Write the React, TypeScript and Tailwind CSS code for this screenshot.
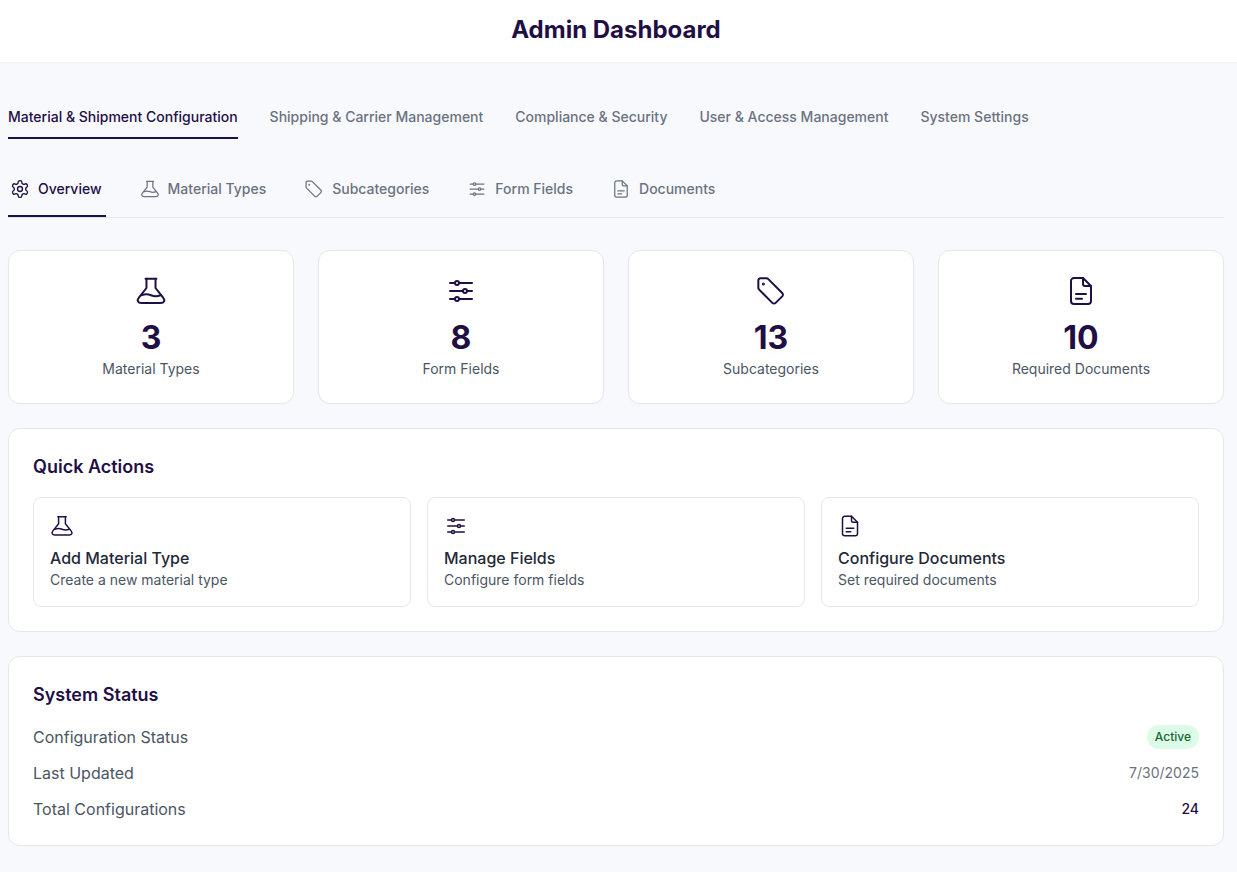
const ink = "text-[#1f0f45]";

type IconProps = { className?: string };

function FlaskIcon({ className }: IconProps) {
  return (
    <svg viewBox="0 0 24 24" fill="none" stroke="currentColor" strokeWidth="1.5" strokeLinecap="round" strokeLinejoin="round" className={className}>
      <path d="M7.9 2.75h8.2" />
      <path d="M8.6 2.75v7L2.9 16.9c-1.7 2.2-.8 4.1 1.9 4.1h14.4c2.7 0 3.6-1.9 1.9-4.1l-5.7-7.15v-7" />
      <path d="M4.9 15.2c2.4-1 4.6-1 7.1 0s4.7 1 7.1 0" />
    </svg>
  );
}

function SlidersIcon({ className }: IconProps) {
  return (
    <svg viewBox="0 0 24 24" fill="none" stroke="currentColor" strokeWidth="1.5" strokeLinecap="round" className={className}>
      <path d="M3.75 6h3.75M10.5 6h9.75M3.75 12h9.75M16.5 12h3.75M3.75 18h3.75M10.5 18h9.75" />
      <circle cx="9" cy="6" r="1.5" />
      <circle cx="15" cy="12" r="1.5" />
      <circle cx="9" cy="18" r="1.5" />
    </svg>
  );
}

function TagIcon({ className }: IconProps) {
  return (
    <svg viewBox="0 0 24 24" fill="none" stroke="currentColor" strokeWidth="1.5" strokeLinecap="round" strokeLinejoin="round" className={className}>
      <path d="M4 2.5h4.6c.5 0 1 .2 1.4.6l10.4 10.4c.7.7.7 1.8 0 2.5l-4.9 4.9c-.7.7-1.8.7-2.5 0L3.1 11c-.4-.4-.6-.9-.6-1.4V4c0-.8.7-1.5 1.5-1.5z" />
      <circle cx="6.3" cy="6.8" r="0.4" fill="currentColor" />
    </svg>
  );
}

function DocIcon({ className }: IconProps) {
  return (
    <svg viewBox="0 0 24 24" fill="none" stroke="currentColor" strokeWidth="1.5" strokeLinecap="round" strokeLinejoin="round" className={className}>
      <path d="M13.5 2.25H6.75A2.25 2.25 0 0 0 4.5 4.5v15a2.25 2.25 0 0 0 2.25 2.25h10.5a2.25 2.25 0 0 0 2.25-2.25V8.25l-6-6z" />
      <path d="M13.5 2.25v4.5A1.5 1.5 0 0 0 15 8.25h4.5" />
      <path d="M8.25 14.25h7.5M8.25 17.75h4.5" />
    </svg>
  );
}

function GearIcon({ className }: IconProps) {
  return (
    <svg viewBox="0 0 24 24" fill="none" stroke="currentColor" strokeWidth="1.6" strokeLinecap="round" strokeLinejoin="round" className={className}>
      <path d="M12.22 2h-.44a2 2 0 0 0-2 2v.18a2 2 0 0 1-1 1.73l-.43.25a2 2 0 0 1-2 0l-.15-.08a2 2 0 0 0-2.73.73l-.22.38a2 2 0 0 0 .73 2.73l.15.1a2 2 0 0 1 1 1.72v.51a2 2 0 0 1-1 1.74l-.15.09a2 2 0 0 0-.73 2.73l.22.38a2 2 0 0 0 2.73.73l.15-.08a2 2 0 0 1 2 0l.43.25a2 2 0 0 1 1 1.73V20a2 2 0 0 0 2 2h.44a2 2 0 0 0 2-2v-.18a2 2 0 0 1 1-1.73l.43-.25a2 2 0 0 1 2 0l.15.08a2 2 0 0 0 2.73-.73l.22-.39a2 2 0 0 0-.73-2.73l-.15-.08a2 2 0 0 1-1-1.74v-.5a2 2 0 0 1 1-1.74l.15-.09a2 2 0 0 0 .73-2.73l-.22-.38a2 2 0 0 0-2.73-.73l-.15.08a2 2 0 0 1-2 0l-.43-.25a2 2 0 0 1-1-1.73V4a2 2 0 0 0-2-2z" />
      <circle cx="12" cy="12" r="3" />
    </svg>
  );
}

const mainTabs = [
  "Material & Shipment Configuration",
  "Shipping & Carrier Management",
  "Compliance & Security",
  "User & Access Management",
  "System Settings",
];

const subTabs = [
  { label: "Overview", icon: GearIcon },
  { label: "Material Types", icon: FlaskIcon },
  { label: "Subcategories", icon: TagIcon },
  { label: "Form Fields", icon: SlidersIcon },
  { label: "Documents", icon: DocIcon },
];

const stats = [
  { value: "3", label: "Material Types", icon: FlaskIcon },
  { value: "8", label: "Form Fields", icon: SlidersIcon },
  { value: "13", label: "Subcategories", icon: TagIcon },
  { value: "10", label: "Required Documents", icon: DocIcon },
];

const actions = [
  { title: "Add Material Type", body: "Create a new material type", icon: FlaskIcon },
  { title: "Manage Fields", body: "Configure form fields", icon: SlidersIcon },
  { title: "Configure Documents", body: "Set required documents", icon: DocIcon },
];

export default function App() {
  return (
    <div className="min-h-[872px] bg-[#f8f9fd] font-['Inter',sans-serif]">
      <header className="flex h-[63px] items-center justify-center border-b border-[#eceef2] bg-white pr-[5px] pb-[2px]">
        <h1 className={`text-2xl font-bold ${ink}`}>Admin Dashboard</h1>
      </header>

      <main className="pt-[39px] pr-[13px] pl-2">
        <nav className="flex gap-8">
          {mainTabs.map((t, i) => (
            <button
              key={t}
              className={
                i === 0
                  ? `h-[37px] border-b-2 border-[#1f0f45] pb-[6px] text-sm font-medium ${ink}`
                  : "h-[37px] pb-[8px] text-sm font-medium text-[#6b7280]"
              }
            >
              {t}
            </button>
          ))}
        </nav>

        <div className="mt-[16px] flex h-[63px] gap-[2px] border-b border-[#e5e7eb]">
          {subTabs.map((t, i) => (
            <button
              key={t.label}
              className={
                i === 0
                  ? `flex h-[62px] items-center gap-2 border-b-2 border-[#1f0f45] pt-[8px] pr-[4px] pl-[2px] text-sm font-medium ${ink}`
                  : "flex h-[63px] items-center gap-2 pt-[5px] pr-[4px] pl-[32px] text-sm font-medium text-[#6b7280]"
              }
            >
              <t.icon className="h-5 w-5" />
              {t.label}
            </button>
          ))}
        </div>

        <section className="mt-8 grid grid-cols-4 gap-6">
          {stats.map((s) => (
            <div key={s.label} className="flex h-[154px] flex-col items-center rounded-xl border border-[#e5e7eb] bg-white pt-[24px] shadow-[0_1px_2px_rgba(0,0,0,0.02)]">
              <s.icon className={`h-8 w-8 ${ink}`} />
              <div className={`mt-[9px] text-[32px] leading-[43px] font-bold ${ink}`}>{s.value}</div>
              <div className="text-sm leading-5 text-[#4b5563]">{s.label}</div>
            </div>
          ))}
        </section>

        <section className="mt-6 h-[204px] rounded-xl border border-[#e5e7eb] bg-white px-6 pt-6">
          <h2 className={`text-lg leading-7 font-semibold ${ink}`}>Quick Actions</h2>
          <div className="mt-4 grid grid-cols-3 gap-4">
            {actions.map((a) => (
              <div key={a.title} className="h-[110px] rounded-lg border border-[#e5e7eb] bg-white px-4 pt-4">
                <a.icon className={`h-6 w-6 ${ink}`} />
                <div className="mt-[8px] text-base leading-6 font-medium text-[#1f2937]">{a.title}</div>
                <div className="text-sm leading-5 text-[#4b5563]">{a.body}</div>
              </div>
            ))}
          </div>
        </section>

        <section className="mt-6 h-[190px] rounded-xl border border-[#e5e7eb] bg-white px-6 pt-6">
          <h2 className={`text-lg leading-7 font-semibold ${ink}`}>System Status</h2>
          <div className="mt-4 flex flex-col gap-3">
            <div className="flex h-6 items-center justify-between">
              <span className="text-base text-[#4b5563]">Configuration Status</span>
              <span className="rounded-full bg-[#dcfce7] px-2 py-[3px] text-xs leading-[18px] font-medium text-[#166534]">Active</span>
            </div>
            <div className="flex h-6 items-center justify-between">
              <span className="text-base text-[#4b5563]">Last Updated</span>
              <span className="text-sm text-[#6b7280]">7/30/2025</span>
            </div>
            <div className="flex h-6 items-center justify-between">
              <span className="text-base text-[#4b5563]">Total Configurations</span>
              <span className={`text-sm font-medium ${ink}`}>24</span>
            </div>
          </div>
        </section>
      </main>
    </div>
  );
}
